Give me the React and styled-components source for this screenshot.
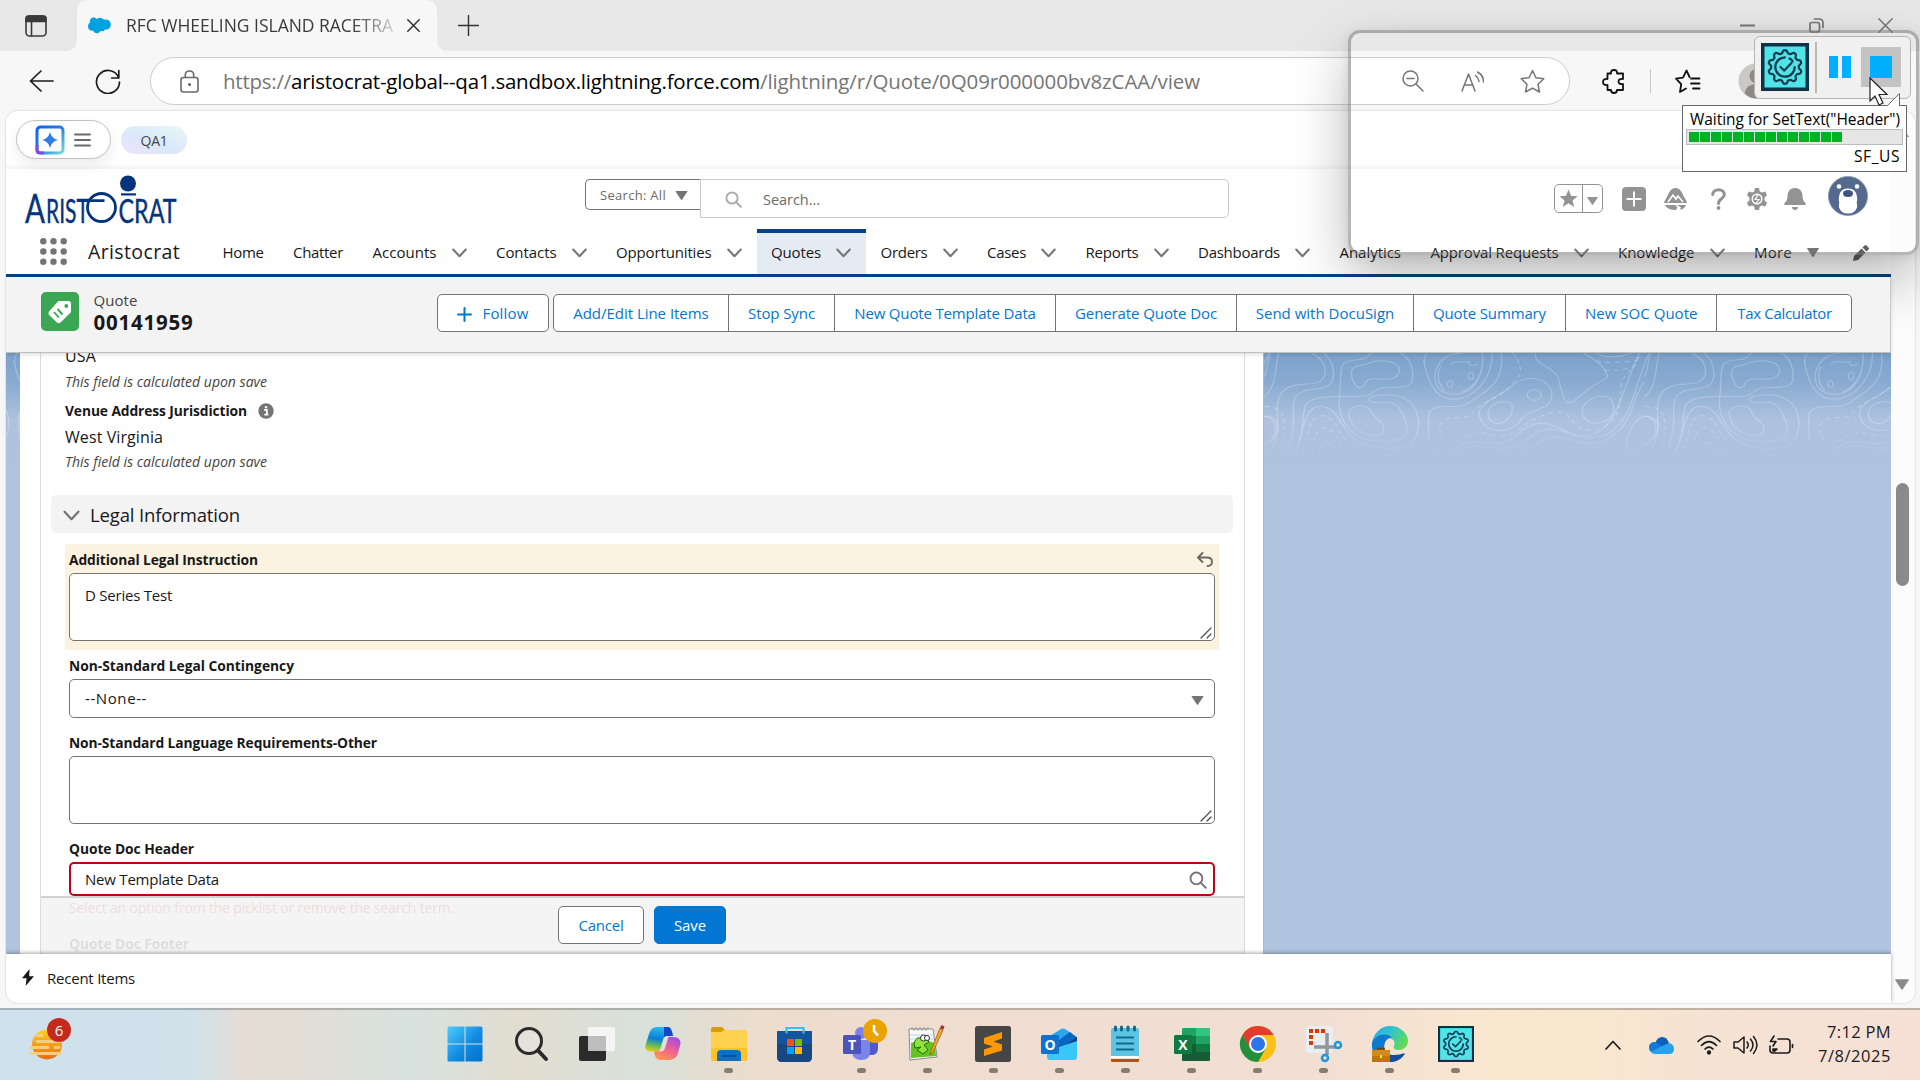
import React, { useLayoutEffect, useRef } from "react";
import styled, { createGlobalStyle, css } from "styled-components";

const Global = createGlobalStyle`
  * { box-sizing: border-box; }
  html, body { margin: 0; padding: 0; overflow: hidden; }
  body { font-family: "Open Sans", "Noto Sans", sans-serif; color: #181818; }
  svg { display: block; flex: none; }
`;

/* ---------- text that keeps to a column width ---------- */
const TextBox = styled.span`
  display: block;
  flex: none;
  white-space: nowrap;
  font-size: ${(p) => p.$size || 15}px;
  font-weight: ${(p) => p.$weight || 400};
  font-style: ${(p) => (p.$italic ? "italic" : "normal")};
  color: ${(p) => p.$color || "inherit"};
  line-height: ${(p) => p.$line || 20}px;
  width: ${(p) => p.$w}px;
  margin-top: ${(p) => p.$mt || 0}px;
`;

function Text({ w, size, weight, italic, color, line, mt, children }) {
  const ref = useRef(null);
  useLayoutEffect(() => {
    const inner = ref.current;
    inner.style.letterSpacing = "0px";
    const natural = inner.getBoundingClientRect().width;
    inner.style.letterSpacing = `${(w - natural) / inner.textContent.length}px`;
  }, [w]);
  return (
    <TextBox $w={w} $size={size} $weight={weight} $italic={italic} $color={color} $line={line} $mt={mt}>
      <span ref={ref}>{children}</span>
    </TextBox>
  );
}

/* ---------- window ---------- */
const Screen = styled.div`
  position: relative;
  width: 1920px;
  height: 1080px;
  overflow: hidden;
  display: flex;
  flex-direction: column;
  background: #f7f7f7;
`;
const TabStrip = styled.div`
  height: 51px;
  background: #e8e8e8;
  display: flex;
  align-items: center;
`;
const Tab = styled.div`
  position: relative;
  width: 360px;
  height: 51px;
  margin-left: 30px;
  padding-left: 10px;
  padding-right: 17px;
  display: flex;
  align-items: center;
  background: #f7f7f7;
  border-radius: 10px 10px 0 0;
  &::before, &::after {
    content: "";
    position: absolute;
    bottom: 0;
    width: 10px;
    height: 10px;
  }
  &::before { left: -10px; background: radial-gradient(circle at 0 0, transparent 9.5px, #f7f7f7 10px); }
  &::after { right: -10px; background: radial-gradient(circle at 100% 0, transparent 9.5px, #f7f7f7 10px); }
`;
const TabTitle = styled.div`
  margin: 0 14px 2px 15px;
  mask-image: linear-gradient(90deg, #000 85%, rgba(0, 0, 0, 0.2) 100%);
`;
const WindowButtons = styled.div`
  margin-left: auto;
  margin-right: 27px;
  display: flex;
  gap: 54px;
`;
const AddressRow = styled.div`
  height: 60px;
  display: flex;
  align-items: center;
  padding: 0 0 0 29px;
`;
const AddressBar = styled.div`
  width: 1420px;
  height: 48px;
  margin-left: 29px;
  border: 1.5px solid #cecece;
  border-radius: 24px;
  background: #fff;
  display: flex;
  align-items: center;
  padding: 0 23px 0 29px;
`;
const Url = styled.div`
  margin-left: 24px;
  margin-right: 202px;
  display: flex;
  padding-bottom: 1px;
`;
const AddressIcons = styled.div`
  display: flex;
  align-items: center;
  gap: 36px;
`;
const ToolbarIcons = styled.div`
  display: flex;
  align-items: center;
  margin-left: 32px;
  gap: 24px;
`;
const Divider = styled.span`
  width: 1px;
  height: 24px;
  background: #c8c8c8;
`;

/* ---------- page ---------- */
const Page = styled.div`
  height: 892px;
  width: 1909px;
  margin-left: 6px;
  display: flex;
  background: #fff;
  border-radius: 12px;
  box-shadow: 0 0 2px rgba(0, 0, 0, 0.25);
  overflow: hidden;
`;
const PageMain = styled.div`
  width: 1885px;
  display: flex;
  flex-direction: column;
`;
const ScrollTrack = styled.div`
  width: 24px;
  background: #fcfcfc;
  display: flex;
  flex-direction: column;
  align-items: center;
  padding: 16px 2px 13px 0;
`;
const ScrollThumb = styled.div`
  width: 13px;
  height: 103px;
  margin-top: 346px;
  margin-bottom: auto;
  border-radius: 7px;
  background: #8a8a8a;
`;
const EnvBar = styled.div`
  height: 58px;
  display: flex;
  align-items: center;
  gap: 10px;
  padding: 0 0 1px 10px;
  background: linear-gradient(#fff 90%, #f3f3f3);
`;
const EinsteinPill = styled.div`
  width: 95px;
  height: 39px;
  border: 1px solid #c0c0c0;
  border-radius: 20px;
  display: flex;
  align-items: center;
  gap: 9px;
  padding-left: 18px;
  background: #fff;
  box-shadow: 0 6px 14px rgba(0, 0, 0, 0.08);
`;
const EnvPill = styled.div`
  width: 66px;
  height: 28px;
  padding-top: 2px;
  border-radius: 14px;
  background: linear-gradient(20deg, #ece3fb, #dbe8fb 45%, #e8f7f5);
  display: flex;
  align-items: center;
  justify-content: center;
`;
const HeaderRow = styled.div`
  height: 60px;
  display: flex;
  padding-left: 18px;
`;
const LogoSlot = styled.div`
  padding-top: 6px;
  width: 561px;
`;
const ScopeSelect = styled.div`
  width: 115px;
  height: 31px;
  margin-top: 10px;
  border: 1px solid #747474;
  border-right: 0;
  border-radius: 5px 0 0 5px;
  display: flex;
  align-items: center;
  gap: 9px;
  padding-left: 14px;
`;
const SearchBox = styled.div`
  width: 529px;
  height: 39px;
  margin-top: 10px;
  border: 1px solid #c9c9c9;
  border-radius: 0 5px 5px 0;
  display: flex;
  align-items: center;
  padding-left: 24px;
  padding-top: 2px;
  gap: 21px;
  background: #fff;
`;
const HeaderTools = styled.div`
  margin-left: 325px;
  padding-top: 3px;
  height: 56px;
  display: flex;
  align-items: center;
`;
const FavBox = styled.div`
  width: 49px;
  height: 29px;
  border: 1px solid #939393;
  border-radius: 5px;
  display: flex;
  align-items: center;
`;
const FavCell = styled.div`
  width: ${(p) => p.$w}px;
  height: 100%;
  padding-top: ${(p) => (p.$line ? 4 : 0)}px;
  display: flex;
  align-items: center;
  justify-content: center;
  border-left: ${(p) => (p.$line ? "1px solid #939393" : "0")};
`;
const ToolIcon = styled.div`
  margin-left: ${(p) => p.$gap || 0}px;
  margin-top: ${(p) => p.$drop || 0}px;
`;
const NavBar = styled.div`
  height: 48px;
  border-bottom: 3px solid #014486;
  display: flex;
  padding-left: 34px;
`;
const AppName = styled.div`
  display: flex;
  align-items: center;
  gap: 21px;
  width: 168px;
`;
const NavItem = styled.div`
  display: flex;
  align-items: center;
  gap: 15px;
  padding: 1px 15px 0 14.5px;
  ${(p) =>
    p.$active &&
    css`
      background: #e5ebf2;
      border-top: 4px solid #014486;
      padding-top: 0;
      padding-bottom: 3px;
    `}
`;
const RecordHeader = styled.div`
  position: relative;
  z-index: 1;
  height: 76px;
  background: #f3f3f3;
  border-bottom: 1px solid #c0c0c0;
  border-right: 1px solid #c9c9c9;
  box-shadow: 0 2px 4px rgba(0, 0, 0, 0.12);
  display: flex;
  padding: 15px 0 0 35px;
`;
const RecordIcon = styled.div`
  width: 38px;
  height: 39px;
  border-radius: 5px;
  background: #3ba755;
  display: flex;
  align-items: center;
  justify-content: center;
`;
const RecordTitle = styled.div`
  margin-left: 14.5px;
  width: 343px;
  margin-top: -3px;
`;
const Button = styled.div`
  height: 38px;
  width: ${(p) => p.$w}px;
  margin-top: ${(p) => p.$mt || 0}px;
  display: flex;
  align-items: center;
  justify-content: center;
  gap: 11px;
  padding-bottom: 1px;
  border: 1px solid ${(p) => (p.$brand ? "#0176d3" : "#747474")};
  border-radius: 5px;
  color: ${(p) => (p.$brand ? "#fff" : "#0176d3")};
  background: ${(p) => (p.$brand ? "#0176d3" : "#fff")};
`;
const ButtonGroup = styled.div`
  display: flex;
  margin-left: 4px;
  margin-top: 2px;
  & > div { margin-left: -1px; border-radius: 0; padding-left: 1px; }
  & > div:first-child { margin-left: 0; border-radius: 5px 0 0 5px; }
  & > div:last-child { border-radius: 0 5px 5px 0; }
`;
const Body = styled.div`
  height: 601px;
  display: flex;
  background: #b0c4df;
  overflow: hidden;
`;
const TopoStrip = styled.div`
  width: ${(p) => p.$w}px;
  border-left: ${(p) => (p.$edge ? "1px solid #b8b8b8" : "0")};
  overflow: hidden;
`;
const Sheet = styled.div`
  width: 1243px;
  background: #fff;
  padding: 0 18px 0 20px;
`;
const Card = styled.div`
  position: relative;
  width: 1205px;
  height: 601px;
  overflow: hidden;
  border: 1px solid #dcdcdc;
  border-width: 0 1px;
  display: flex;
  flex-direction: column;
  & > div { flex: none; }
`;
const ReadOnly = styled.div`
  padding-left: 24px;
  margin-top: -8px;
`;
const LabelRow = styled.div`
  display: flex;
  align-items: center;
  gap: 11px;
  margin-top: 9px;
`;
const SectionHead = styled.div`
  height: 38px;
  width: 1182px;
  margin: 23px 0 11px 10px;
  background: #f3f3f3;
  border-radius: 5px;
  display: flex;
  align-items: center;
  gap: 10px;
  padding-left: 12px;
  padding-top: 2px;
`;
const Field = styled.div`
  width: 1154px;
  margin-left: 24px;
  padding: ${(p) => (p.$edited ? "6px 4px 9px" : "0 4px")};
  margin-bottom: ${(p) => (p.$edited ? 6 : 15)}px;
  background: ${(p) => (p.$edited ? "#fbf3e0" : "transparent")};
`;
const FieldLabel = styled.div`
  display: flex;
  justify-content: space-between;
  height: 20px;
  margin-bottom: 3px;
  padding-right: 2px;
`;
const Control = styled.div`
  height: ${(p) => p.$h}px;
  width: 1146px;
  background: #fff;
  border: ${(p) => (p.$error ? "2px solid #ba0517" : "1px solid #747474")};
  border-radius: 5px;
  display: flex;
  justify-content: space-between;
  align-items: ${(p) => (p.$area ? "stretch" : "center")};
  padding: ${(p) => (p.$area ? "11px 2px 1px 15px" : p.$error ? "0 6px 1px 14px" : "0 10px 2px 15px")};
`;
const Corner = styled.div`
  display: flex;
  align-items: flex-end;
  margin-left: auto;
`;
const Hidden = styled.div`
  margin: -13px 0 0 28px;
`;
const Footer = styled.div`
  position: absolute;
  left: 0;
  right: 0;
  bottom: 0;
  height: 58px;
  background: rgba(243, 243, 243, 0.9);
  border-top: 2px solid #d2d2d2;
  display: flex;
  gap: 10px;
  padding-top: 8px;
  padding-left: 517px;
`;
const UtilityBar = styled.div`
  position: relative;
  height: 49px;
  background: #fff;
  box-shadow: 0 -1px 4px rgba(0, 0, 0, 0.35);
  display: flex;
  align-items: center;
  gap: 12px;
  padding-left: 15px;
  padding-bottom: 2px;
`;

/* ---------- taskbar ---------- */
const Taskbar = styled.div`
  height: 72px;
  margin-top: 5px;
  border-top: 2px solid rgba(0, 0, 0, 0.22);
  display: flex;
  align-items: center;
  background: linear-gradient(90deg, #cfe1ed 0, #d1e1ea 190px, #e5ddd5 245px, #e3ddd5 290px, #d8e2df 410px, #e2ddd0 520px, #d8e1db 640px, #e6ddcf 720px, #edddcc 760px, #efddd0 900px, #f2dfd4 1320px, #f9e8cf 1500px, #f8e7cf 1600px, #f5e3d3 1700px, #f6e0d6 1920px);
  background-clip: border-box;
`;
const Widgets = styled.div`
  width: 431.5px;
  padding-left: 29px;
  padding-bottom: 10px;
`;
const TaskCell = styled.div`
  width: 66.1px;
  height: 70px;
  display: flex;
  flex-direction: column;
  align-items: center;
  padding-top: 8px;
`;
const RunningDot = styled.span`
  width: 9px;
  height: 5px;
  border-radius: 3px;
  margin-top: 6px;
  background: #857c74;
`;
const Tray = styled.div`
  margin-left: auto;
  margin-right: 29px;
  display: flex;
  align-items: center;
`;
const TrayIcon = styled.div`
  margin-right: ${(p) => p.$gap}px;
`;
const Clock = styled.div`
  display: flex;
  flex-direction: column;
  align-items: flex-end;
  padding-bottom: 3px;
`;

/* ---------- floating automation panel ---------- */
const Ghost = styled.div`
  position: absolute;
  left: 1348px;
  top: 30px;
  width: 571px;
  height: 225px;
  border: 3px solid rgba(110, 110, 110, 0.5);
  border-radius: 12px;
  box-shadow: 0 24px 56px rgba(0, 0, 0, 0.27), 0 2px 12px rgba(0, 0, 0, 0.08);
`;
const Panel = styled.div`
  position: absolute;
  left: 1754px;
  top: 36px;
  width: 157px;
  height: 63px;
  background: #f0f0f0;
  border: 1.5px solid #b9b4ac;
  border-radius: 6px;
  display: flex;
  align-items: center;
  padding-left: 6px;
  padding-bottom: 1px;
`;
const PanelLine = styled.span`
  width: 2px;
  height: 51px;
  margin-left: 6px;
  background: #bcb7af;
`;
const Pause = styled.span`
  width: 22px;
  height: 22px;
  margin-left: 12px;
  border: solid #00b0ff;
  border-width: 0 9px;
`;
const StopKey = styled.div`
  width: 40px;
  height: 40px;
  margin-left: 10px;
  margin-top: -1px;
  background: #c3c3c3;
  display: flex;
  align-items: center;
  justify-content: center;
`;
const StopSquare = styled.span`
  width: 22px;
  height: 22px;
  background: #00b0ff;
`;
const Tip = styled.div`
  position: absolute;
  left: 1682px;
  top: 105px;
  width: 225px;
  height: 67px;
  background: #fff;
  border: 1px solid #6a6a6a;
  padding: 3px 3px 0;
  display: flex;
  flex-direction: column;
  align-items: flex-end;
`;
const TipLine = styled.div`
  padding-right: 3px;
  color: #000;
`;
const Progress = styled.div`
  width: 217px;
  height: 16px;
  background: #e6e6e6;
  border: 1px solid #bcbcbc;
  display: flex;
  gap: 1px;
  padding: 2px;
`;
const Block = styled.span`
  width: 10px;
  background: #06b025;
`;
const Floating = styled.div`
  position: absolute;
  left: ${(p) => p.$x}px;
  top: ${(p) => p.$y}px;
`;

/* ---------- drawings ---------- */
const Stroke = ({ w, h, vb, c = "#5c5c5c", sw = 1.5, children }) => (
  <svg width={w} height={h} viewBox={vb || `0 0 ${w} ${h}`} fill="none" stroke={c} strokeWidth={sw} strokeLinecap="round" strokeLinejoin="round">
    {children}
  </svg>
);
const Chevron = ({ w = 15, h = 10 }) => (
  <Stroke w={w} h={h} vb="0 0 15 10" c="#747474" sw={2}><path d="M1.2 1.5 7.5 8.3l6.3-6.8" /></Stroke>
);
const Triangle = ({ w = 12, h = 9, c = "#747474" }) => (
  <svg width={w} height={h} viewBox="0 0 12 9"><path d="M.6 0h10.800q.9 0 .4.800L6.600 8.500q-.6.800-1.200 0L.2.800Q-.3 0 .6 0z" fill={c} /></svg>
);
const Magnifier = ({ s = 17, c = "#aeaeae", sw = 2 }) => (
  <Stroke w={s} h={s} vb="0 0 17 17" c={c} sw={sw}><circle cx="7" cy="7" r="5.6" /><path d="m11 11 4.8 4.8" /></Stroke>
);
const Resize = () => (
  <Stroke w={12} h={12} c="#4a4a4a" sw={1.2}><path d="M1 11 11 1M7 11l4-4" /></Stroke>
);

const SEAL = Array.from({ length: 121 }, (_, i) => {
  const t = (i / 120) * Math.PI * 2;
  const r = 15.2 + 1.7 * Math.max(-0.8, Math.min(0.9, 1.3 * Math.cos(t * 10)));
  return `${(24 + r * Math.sin(t)).toFixed(2)} ${(24 - r * Math.cos(t)).toFixed(2)}`;
}).join("L");

const GearSeal = ({ size, bw }) => (
  <svg width={size} height={size} viewBox="0 0 48 48">
    <rect x={bw / 2} y={bw / 2} width={48 - bw} height={48 - bw} fill="#50e3e8" stroke="#0f3247" strokeWidth={bw} />
    <g fill="none" stroke="#123b50" strokeWidth="2.200" strokeLinejoin="round" strokeLinecap="round">
      <path d={`M${SEAL}z`} />
      <path d="M24 14.300A9.700 9.700 0 1 0 33.700 24M28.500 15.500q2 1 3.200 2.800" />
      <path d="m19.500 24 3.800 3.600L30.500 20" />
    </g>
  </svg>
);

const AristocratLogo = () => (
  <svg width="160" height="64" viewBox="0 0 160 64" fill="#06347c" stroke="#06347c" fontFamily="Lato, sans-serif">
    <circle cx="104" cy="8.500" r="8" stroke="none" />
    <rect x="97" y="18.300" width="15" height="2.200" stroke="none" />
    <text x="1" y="47.500" fontSize="40" strokeWidth=".4" textLength="20" lengthAdjust="spacingAndGlyphs">A</text>
    <text x="22" y="47.500" fontSize="32" strokeWidth=".4" textLength="43" lengthAdjust="spacingAndGlyphs">RIST</text>
    <path d="M54 25.600h26.500" strokeWidth="2.600" />
    <circle cx="77.500" cy="32.500" r="14" fill="none" strokeWidth="2.800" />
    <text x="94.500" y="47.500" fontSize="32" strokeWidth=".4" textLength="58" lengthAdjust="spacingAndGlyphs">CRAT</text>
  </svg>
);

const Topo = ({ shift = 0, w }) => (
  <svg width={w} height="134" viewBox={`${54 + shift} 38 ${w * 2.306} 402`} preserveAspectRatio="none">
    <defs>
      <linearGradient id="sky" x1="0" y1="0" x2="0" y2="1">
        <stop offset="0" stopColor="#7ba1ca" />
        <stop offset=".22" stopColor="#89abd1" />
        <stop offset=".5" stopColor="#aec2df" />
        <stop offset="1" stopColor="#b0c4df" />
      </linearGradient>
      <linearGradient id="fade" x1="0" y1="38" x2="0" y2="350" gradientUnits="userSpaceOnUse">
        <stop offset="0" stopColor="#fff" stopOpacity=".23" />
        <stop offset=".65" stopColor="#fff" stopOpacity=".25" />
        <stop offset="1" stopColor="#fff" stopOpacity="0" />
      </linearGradient>
      <g id="contours" fill="none" stroke="url(#fade)" strokeWidth="3">
        <path d="M54 170c30-30 25-90 34-132M54 110c8-20 8-45 14-72M165 38c20 14 32 32 30 58-2 34-25 34-54 36-35 4-52 20-56 60-4 50 12 110-30 156" />
        <path d="M192 38c18 20 24 45 22 70-3 36-24 34-56 40-34 8-38 30-36 70 2 50-4 90-24 130" />
        <path d="M368 38c25 15 30 50 29 78-3 28-30 25-66 26-26 0-26 26-48 26-60 2-115-6-132 24-14 30 2 110-35 156" />
        <path d="M228 168c4-30 0-60 6-90 8-25 38-15 54-25l14-15M256 95c2-26 26-15 42-28 22-10 66-8 68 22 0 34-38 28-58 26-26 0-18 26-32 27-12 0-22-26-20-47z" />
        <path d="M120 348c24-40 20-150 64-150 40 2 46 60 76 96 34 38 100 32 120 26 30-12 34-70 28-94-8-50-42-66-82-62-24 0-38 14-24 21 20 6 40-8 60 12 16 30 22 60 22 75-4 38-60 34-90 28-60-24-70-90-66-130" />
        <path d="M250 222c-2-20 20-28 36-24 20 8 14 28 30 40 22 22 18 48-8 48-30-4-55-26-58-64z" />
        <path d="M422 60c6 40 20 110 60 116 60 6 100-70 98-138M430 38q-10 15-4 40" />
        <path d="M510 38c-36 0-60 30-62 70 0 40 20 54 48 54 40-4 66-50 62-124M462 78c-10 20-8 50 8 72M558 70c-4 36-14 64-46 84M484 72c10-16 26-2 44-8-2 18 10 10 20 8" />
        <ellipse cx="483" cy="131" rx="6" ry="10" /><ellipse cx="531" cy="107" rx="6" ry="11" />
        <path d="M433 300c2-30-2-60 2-84 16-30 60-8 86-24 46-40 88-62 80-154" />
        <path d="M436 320c8 25 50 12 70-2 30-30 60 0 100-10 30-12 44-55 84-60 44 0 60 42 110 38 70-10 84-160 120-248" />
        <path d="M490 340c60-50 90 0 140-20 36-20 54-66 100-50 40 10 70 40 118 10 60-50 60-150 94-242M560 345c60-30 90 0 120-30 60-60 90 10 150-10 80-40 70-130 100-180M549 220c6-40 50-50 84-90 34-32 86-12 85 35-4 50-50 36-70 70-20 50-90 50-99-15z" />
        <path d="M572 210c4-24 50-38 54-14 6 40-30 70-50 44-6-8-6-20-4-30z" />
        <circle cx="677" cy="164" r="16" />
        <path d="M680 38c-6 40 50 40 54 84 4 20 12 60 20 66 22 0 30-36 92-76 0-20-20-52-56-74M788 220c-4-24 20-54 46-52 24-2 28 24 26 44-6 40-60 54-72 8zM820 38c20 18 60 12 82 0" />
        <path d="M892 335c-8-30 10-106 44-108 44 12 30 60-4 86-16 14-30 20-40 22zM54 228c40 2 30 80 0 86M184 348c-4-30 10-68 34-20l26 20" />
        <g strokeDasharray="12 10">
          <path d="M628 38c10 20 30 50 6 82-34 60-84 60-104 106-18 12-60-6-70 28-6 60 30 60 54 40 50-40 60 6 110-12 40-34 60-60 112-68 30 2 28 56 70 54 60-4 70-50 72-140 10-40 30-30 42-90M820 62q40 10 96-2M838 90q50 4 78-20" />
          <path d="M142 348c18-60 8-120 48-122 40 12 30 60 70 94M166 348c2-50 6-84 28-86 34 10 30 60 66 86M54 198c60 0 50 60 40 130" />
        </g>
      </g>
    </defs>
    <rect x="-900" y="38" width="3600" height="402" fill="url(#sky)" />
    <use href="#contours" x="-877" /><use href="#contours" /><use href="#contours" x="877" />
  </svg>
);

const Cloud = ({ w, h, c }) => (
  <svg width={w} height={h} viewBox="0 0 24 17"><path d="M10 2.100A4.700 4.700 0 0 1 17 2.800 5 5 0 0 1 23.800 7.500c0 3.400-2.800 5.500-5.800 4.900-.9 1.700-3 2.300-4.600 1.500-1.400 3-6 3.200-7.300-.3C3.300 14.200.9 12 1 9.300 1.200 7.400 2 6.300 3 5.600 1.800.3 7.600-1.100 10 2.100z" fill={c} /></svg>
);

/* taskbar app drawings, each on a 36 x 36 grid */
const apps = [
  { id: "start", art: (<>
    <defs><linearGradient id="win" x1="0" y1="0" x2="1" y2="1"><stop offset="0" stopColor="#4ecbff" /><stop offset=".55" stopColor="#128be0" /><stop offset="1" stopColor="#0070d0" /></linearGradient></defs>
    <path d="M2 .5h15.500v17H.5V2Q.5.500 2 .5zM18.500.500H34q1.500 0 1.500 1.500v15.500h-17zM.5 18.500h17v17H2Q.5 35.500.5 34zM18.500 18.500h17V34q0 1.500-1.500 1.500H18.500z" fill="url(#win)" /></>) },
  { id: "search", art: (<g fill="none" stroke="#2b2b2b" strokeLinecap="round"><circle cx="16" cy="15" r="12.500" strokeWidth="3" fill="#e8e8e6" fillOpacity=".5" /><path d="m25.500 25 7.500 8" strokeWidth="4" /></g>) },
  { id: "tasks", art: (<><rect x="0" y="10" width="27" height="25" rx="2" fill="#2b2b2b" /><rect x="9" y="1" width="27" height="24" rx="2" fill="#f6f6f6" fillOpacity=".93" /><path d="M9 10h18v15H10q-1 0-1-1z" fill="#bdbdbd" /></>) },
  { id: "copilot", art: (<>
    <defs><linearGradient id="c1" x1=".3" y1="0" x2=".1" y2="1"><stop offset="0" stopColor="#1fb8f0" /><stop offset=".45" stopColor="#0d7fd6" /><stop offset=".7" stopColor="#5cb860" /><stop offset="1" stopColor="#f5cf1a" /></linearGradient><linearGradient id="c2" x1=".8" y1="0" x2=".2" y2="1"><stop offset="0" stopColor="#a04be8" /><stop offset=".5" stopColor="#f06292" /><stop offset="1" stopColor="#ff9a4a" /></linearGradient></defs>
    <path d="M9 25.500 15 24l6-13h7q8 0 7.500 7L33 27q-2 7-9 7H15q-5 0-6-8.500z" fill="url(#c2)" />
    <path d="M12 1h11q3.500 0 5 9h-6q-3 0-4 4l-2.500 8q-1 3.500-5 3.500H5Q-.5 25.500.5 19L4 8q2-7 8-7z" fill="url(#c1)" />
    <path d="M19 1h4q3.500 0 5 9h-6q-2 0-3 2z" fill="#1747c8" />
    <path d="M19 11.500q1-1.500 3.500-1.500h1.200L20 22q-1 3.500-5 3.500h-1.500q1.800-1 2.500-3.500z" fill="#dfe2dc" /></>) },
  { id: "explorer", run: true, art: (<>
    <path d="M0 3q0-2 2-2h9l4 4v5H0z" fill="#dd9a08" /><path d="M0 6h10l3-2h21q2 0 2 2v27q0 2-2 2H2q-2 0-2-2z" fill="#ffd04b" /><path d="M0 22h36v11q0 2-2 2H2q-2 0-2-2z" fill="#fcc226" />
    <path d="M6 35V28q0-4 4-4h16q4 0 4 4v7z" fill="#0f6fc4" /><path d="M11 30h14" stroke="#084f94" strokeWidth="2" /></>) },
  { id: "store", art: (<><path d="M9.500 9V2h17v7" fill="none" stroke="#30c0f4" strokeWidth="2.200" /><path d="M0 5h35v26q0 5-5 5H5q-5 0-5-5z" fill="#12559b" /><path d="M0 18h35v13q0 5-5 5H5q-5 0-5-5z" fill="#1b4278" opacity=".7" /><path d="M9.500 7.500V5M26.500 7.500V5" stroke="#30c0f4" strokeWidth="2.200" /><path d="M10 13h7v7h-7z" fill="#f25022" /><path d="M18 13h7v7h-7z" fill="#7fba00" /><path d="M10 21h7v7h-7z" fill="#00a4ef" /><path d="M18 21h7v7h-7z" fill="#ffb900" /></>) },
  { id: "teams", run: true, art: (<><circle cx="18" cy="7" r="6" fill="#7b83eb" /><path d="M23 14h12v8q0 7-6 7h-6z" fill="#5059c9" /><path d="M9 14h18v12q0 8-9 8-8 0-9-8z" fill="#7b83eb" /><rect x="0" y="9" width="18" height="19" rx="1.500" fill="#4b53bc" /><text x="9" y="24" textAnchor="middle" fontFamily="Open Sans" fontWeight="700" fontSize="14" fill="#fff">T</text><circle cx="32" cy="5" r="12" fill="#eaa300" /><path d="M31-1v6l4 4.500" stroke="#fff" strokeWidth="2.500" fill="none" /></>) },
  { id: "npp", run: true, art: (<><path d="M0 3h24l4 28-27 3z" fill="#fafafa" stroke="#8a8a8a" /><path d="M2 3q1-3 2 0t2 0 2 0 2 0 2 0 2 0 2 0 2 0 2 0" fill="none" stroke="#999" /><path d="M2 17q12-5 24 0l1 13-25 2z" fill="#62c41c" /><path d="M1 9h24M1 13h24" stroke="#b9d3ee" /><path d="M5 17q3-8 9-4l4-3 2 6-5 3 4 5-5 4-6-4 4-3-6 1z" fill="#8fe43c" stroke="#1d6b17" /><circle cx="14.500" cy="12" r="3" fill="#fff" stroke="#333" /><circle cx="18" cy="12" r="2.500" fill="#fff" stroke="#333" /><path d="m31 2-9 23-1 4 3-3L34 4z" fill="#f0a92c" stroke="#9a611a" strokeWidth=".8" /><path d="m31 2 1.500-3 3 1.500L34 4z" fill="#a53030" /></>) },
  { id: "sublime", run: true, art: (<><rect width="36" height="36" rx="2.500" fill="#464646" /><path d="m9 12 18-6v6.500L18.500 15.500 27 18.500v6L9 30v-6.500l9-3-9-3z" fill="#ff9800" /></>) },
  { id: "outlook", run: true, art: (<><path d="M9 10 20 3q2-1 4 0l12 8v8L9 25z" fill="#28a8ea" /><path d="m14 17 15-11 7 6-18 12z" fill="#0a64c2" /><path d="M18 24 36 11v6L20 27z" fill="#123b8c" /><path d="M6 25 36 15v16q0 3-3 3H9q-3 0-3-3z" fill="#39c7f8" /><rect y="9" width="18" height="19" rx="1.500" fill="#0f72d0" /><text x="9" y="24" textAnchor="middle" fontFamily="Open Sans" fontWeight="700" fontSize="14" fill="#fff">O</text></>) },
  { id: "notepad", run: true, art: (<><rect x="4" y="2" width="28" height="30" rx="2" fill="#5cc3e2" /><path d="M4 30h28v2H4z" fill="#fff" /><path d="M4 33h28v2q0 1-1 1H5q-1 0-1-1z" fill="#b5530d" /><path d="M9 11.500h18M9 17.500h18M9 23.500h18" stroke="#0d6a92" strokeWidth="2" /><path d="M8.500 1v3M14.500 1v3M21 1v3M27.500 1v3" stroke="#14688a" strokeWidth="3" strokeLinecap="round" /></>) },
  { id: "excel", run: true, art: (<><rect x="8" y="2" width="28" height="33" rx="1.500" fill="#21a366" /><path d="M22 2h12.500Q36 2 36 3.500V10H22z" fill="#33c481" /><path d="M8 10h14v8H8zM22 18h14v8H22z" fill="#107c41" /><path d="M8 18h14v8H8zM8 26h28v7.500q0 1.500-1.500 1.500h-25Q8 35 8 33.500z" fill="#185c37" /><rect y="9" width="18" height="19" rx="1.500" fill="#0f7a3f" /><text x="9" y="24" textAnchor="middle" fontFamily="Open Sans" fontWeight="700" fontSize="14" fill="#fff">X</text></>) },
  { id: "chrome", run: true, art: (<><circle cx="18" cy="18" r="18" fill="#fbc116" /><path d="M2.400 9A18 18 0 0 1 33.600 9H18L9.500 22z" fill="#e33b2e" /><path d="M2.400 9A18 18 0 0 0 18 36l8-14-8 5-8-5z" fill="#22903f" /><circle cx="18" cy="18" r="9" fill="#fff" /><circle cx="18" cy="18" r="7" fill="#2f74ea" /></>) },
  { id: "snip", run: true, art: (<><rect width="27" height="27" rx="3" fill="#e9eef3" /><path d="M3 3h4v4H3zM9 3h4v4H9zM15 3h4v4h-4zM3 9h4v4H3zM3 15h4v4H3z" fill="#d83b01" /><path d="M21 7v22M8 21h22" stroke="#8e979d" strokeWidth="3.500" /><circle cx="32" cy="19" r="3" fill="none" stroke="#1d97e0" strokeWidth="2.500" /><circle cx="19" cy="32" r="3" fill="none" stroke="#1d97e0" strokeWidth="2.500" /></>) },
  { id: "edge", run: true, art: (<>
    <defs><linearGradient id="e1" x1="0" y1="0" x2="1" y2=".5"><stop offset="0" stopColor="#2ba8e8" /><stop offset=".5" stopColor="#30c3cd" /><stop offset="1" stopColor="#62da55" /></linearGradient></defs>
    <path d="M0 18C1 7 9 0 18 0c11 0 18 8 18 15 0 6-5 9-9 9-5 0-6-2-5-4 2-4-1-8-6-8-8 0-15 4-16 14z" fill="url(#e1)" /><path d="M0 17c2-8 15-12 20-5-7-1-9 8-7 13 2 6 11 6 20 3-4 6-10 8-15 8C8 36-1 28 0 17z" fill="#0f78cf" /><path d="M13 24c2 6 11 6 20 3-4 6-8 9-15 9z" fill="#124d9c" />
    <path d="M0 24h18v12H0z" fill="#c07410" /><path d="M0 24h18v6H0z" fill="#d68a14" /><path d="M6 24v-1.500h6V24" stroke="#6d3e05" strokeWidth="1.500" fill="none" /><path d="M8 29h2v3H8z" fill="#ffe14d" /></>) },
  { id: "runner", run: true, art: <GearSeal size={36} bw={2.8} /> },
];

const nav = [
  ["Home", 41, 0], ["Chatter", 50, 0], ["Accounts", 64, 1], ["Contacts", 60.5, 1], ["Opportunities", 95.5, 1],
  ["Quotes", 50, 1], ["Orders", 47, 1], ["Cases", 39, 1], ["Reports", 53, 1], ["Dashboards", 82, 1],
  ["Analytics", 61.5, 0], ["Approval Requests", 128, 1], ["Knowledge", 76.5, 1],
];
const actions = [
  ["Add/Edit Line Items", 176, 135.5], ["Stop Sync", 107, 67], ["New Quote Template Data", 222, 181.5],
  ["Generate Quote Doc", 182, 142], ["Send with DocuSign", 178, 138.5], ["Quote Summary", 153, 113],
  ["New SOC Quote", 152.5, 112.5], ["Tax Calculator", 136, 94.5],
];

function BrowserChrome() {
  return (
    <>
      <TabStrip>
        <ToolIcon $gap={25}>
          <Stroke w={22} h={22} c="#3a3a3a" sw={1.6}><rect x="1" y="1" width="20" height="20" rx="3.500" /><path d="M1 3.500q0-2.500 2.500-2.500h15Q21 1 21 3.500V6.500H1z" fill="#3a3a3a" /><path d="M6.500 7v14" /></Stroke>
        </ToolIcon>
        <Tab>
          <Cloud w={24} h={17} c="#00a1e0" />
          <TabTitle><Text w={267} size={17.5} color="#3a3a3a" line={24}>RFC WHEELING ISLAND RACETRA</Text></TabTitle>
          <Stroke w={13} h={13} c="#333" sw={1.5}><path d="m.8.800 11.400 11.400M12.200.800.800 12.200" /></Stroke>
        </Tab>
        <ToolIcon $gap={21}><Stroke w={21} h={21} c="#333" sw={1.4}><path d="M10.500.500v20M.5 10.500h20" /></Stroke></ToolIcon>
        <WindowButtons>
          <Stroke w={15} h={15} c="#777" sw={2}><path d="M.5 7.500h14" /></Stroke>
          <Stroke w={15} h={15} c="#777" sw={1.7}><rect x="1" y="4.500" width="9.500" height="9.500" rx="2" /><path d="M5.500 1H10q4 0 4 4v4.500" /></Stroke>
          <Stroke w={15} h={15} c="#777" sw={1.5}><path d="m.8.800 13.400 13.400M14.200.800.800 14.200" /></Stroke>
        </WindowButtons>
      </TabStrip>
      <AddressRow>
        <Stroke w={25} h={22} c="#1c1c1c" sw={1.7}><path d="M24 11H1.500M12 1 1.500 11 12 21" /></Stroke>
        <ToolIcon $gap={41}><Stroke w={26} h={25} c="#1c1c1c" sw={1.7}><path d="M23.800 9A11.500 11.500 0 1 0 24.500 13M23.800 1.500V9h-7" /></Stroke></ToolIcon>
        <AddressBar>
          <Stroke w={19} h={23} c="#6a6a6a" sw={1.6}><rect x="1" y="7.500" width="17" height="14.500" rx="2.500" /><path d="M5.300 7V5q0-4 4.200-4t4.200 4v2" /><circle cx="9.500" cy="14.500" r=".8" fill="#6a6a6a" /></Stroke>
          <Url>
            <Text w={68} size={20.5} color="#757575" line={28}>https://</Text>
            <Text w={469} size={20.5} color="#000" line={28}>aristocrat-global--qa1.sandbox.lightning.force.com</Text>
            <Text w={440} size={20.5} color="#757575" line={28}>/lightning/r/Quote/0Q09r000000bv8zCAA/view</Text>
          </Url>
          <AddressIcons>
            <Stroke w={22} h={22} c="#757575"><circle cx="8.500" cy="8.500" r="7.500" /><path d="M5 8.500h7M14 14l7 7" /></Stroke>
            <Stroke w={24} h={21} c="#757575"><path d="m2 20 6.500-17L15 20M4.500 14h8.500M15.500 4.500q3 2.500 3.500 6M17.500 1q6 3 6 10" /></Stroke>
            <Stroke w={25} h={24} c="#757575"><path d="m12.500 1.500 3.400 7.200 7.900 1-5.800 5.500 1.500 7.800-7-3.900-7 3.900L7 15.200 1.200 9.700l7.900-1z" /></Stroke>
          </AddressIcons>
        </AddressBar>
        <ToolbarIcons>
          <Stroke w={24} h={25} c="#111" sw={1.8}><path d="M5.500 4.500h3.500q-.5-3.500 3-3.500t3 3.500h6V10q-4.500-.5-4.500 2.500t4.500 2.500v6h-6q0 3-3 3t-3-3H5.500v-5Q1 16.500 1 13t4.500-3z" /></Stroke>
          <Divider />
          <Stroke w={26} h={25} c="#111" sw={1.8}><path d="M14.500 8 11.500 1.500 8 8.700l-7 1 5.200 5.500L5 23l6-3.500M16 9.500h8.500M16 14.500h8.500M18 19.500h6.500" /></Stroke>
          <svg width="52" height="42" viewBox="0 0 52 42"><circle cx="31" cy="21" r="17.500" fill="#cbc9c5" /><circle cx="32" cy="16" r="7.500" fill="#8c8a87" /><path d="M19.500 33q2-9 12.500-9v14.500q-8 0-12.500-5.500z" fill="#8c8a87" /></svg>
        </ToolbarIcons>
      </AddressRow>
    </>
  );
}

function AppHeader() {
  return (
    <>
      <EnvBar>
        <EinsteinPill>
          <svg width="30" height="30" viewBox="0 0 30 30">
            <defs><linearGradient id="ein" x1="0" y1="0" x2="1" y2="1"><stop offset="0" stopColor="#0f62f5" /><stop offset=".5" stopColor="#2a7de1" /><stop offset="1" stopColor="#6fe0cf" /></linearGradient></defs>
            <rect x="2" y="2" width="26" height="26" rx="3.500" fill="#fff" stroke="url(#ein)" strokeWidth="3" />
            <path d="M2 20v5q0 3 3 3h4" fill="none" stroke="#7b4fe0" strokeWidth="3" />
            <path d="M15 7q1.500 6.500 8 8-6.500 1.500-8 8-1.500-6.500-8-8 6.500-1.500 8-8z" fill="#2f7ee6" />
          </svg>
          <Stroke w={17} h={14} c="#6b6b6b" sw={2}><path d="M1 1.500h15M1 7h15M1 12.500h15" /></Stroke>
        </EinsteinPill>
        <EnvPill><Text w={27} size={14} color="#444">QA1</Text></EnvPill>
      </EnvBar>
      <HeaderRow>
        <LogoSlot><AristocratLogo /></LogoSlot>
        <ScopeSelect><Text w={66} size={13} color="#6b6b6b">Search: All</Text><ToolIcon $drop={2}><Triangle w={13} /></ToolIcon></ScopeSelect>
        <SearchBox><Magnifier /><Text w={57} size={14.5} color="#6b6b6b">Search...</Text></SearchBox>
        <HeaderTools>
          <FavBox>
            <FavCell $w={28}><svg width="19" height="19" viewBox="0 0 20 20"><path d="m10 .5 2.600 6.600 7 .4-5.400 4.500 1.800 6.900L10 15l-6 3.900L5.800 12 .4 7.500l7-.4z" fill="#939393" /></svg></FavCell>
            <FavCell $w={20} $line><Triangle w={11} h={8} c="#939393" /></FavCell>
          </FavBox>
          <ToolIcon $gap={19}><svg width="24" height="24" viewBox="0 0 24 24"><rect width="24" height="24" rx="4" fill="#939393" /><path d="M12 4.500v15M4.500 12h15" stroke="#fff" strokeWidth="2" /></svg></ToolIcon>
          <ToolIcon $gap={18}><svg width="23" height="22" viewBox="0 0 23 22"><path d="M11.500 0C16 0 18 4 20 9c2 3 3 5 3 6H0c0-1 1-3 3-6C5 4 7 0 11.500 0z" fill="#939393" /><path d="m4 14 5-7 3 4 2-3 5 6" fill="none" stroke="#fff" strokeWidth="1.600" /><path d="M1 17h10l2.500 2-1.500 3Q3 22 1 17zM13 17h9q-1.500 4-6 4.800l1-2.300z" fill="#939393" /></svg></ToolIcon>
          <ToolIcon $gap={24}><svg width="15" height="22" viewBox="0 0 15 22"><path d="M1.700 6.500C2 0 13.300 0 13.300 6.500c0 4.500-5.800 4-5.800 9" fill="none" stroke="#939393" strokeWidth="3" strokeLinecap="round" /><circle cx="7.500" cy="20" r="1.900" fill="#939393" /></svg></ToolIcon>
          <ToolIcon $gap={20}><svg width="22" height="22" viewBox="0 0 22 22"><path d="M9 0h4l.8 3.400 2 1.100 3.300-1 2 3.500-2.500 2.500v3l2.500 2.500-2 3.500-3.300-1-2 1.100L13 22H9l-.8-3.400-2-1.100-3.300 1-2-3.500 2.500-2.500v-3L.9 7l2-3.500 3.300 1 2-1.100z" fill="#939393" /><circle cx="11" cy="11" r="4.800" fill="none" stroke="#fff" strokeWidth="1.500" /><path d="m12 7-3 4.500h4L10 15.500" stroke="#fff" strokeWidth="1.200" fill="none" /></svg></ToolIcon>
          <ToolIcon $gap={16}><svg width="22" height="22" viewBox="0 0 22 22"><path d="M11 0q7 0 7.500 8 0 5 3 7 1 2-.5 2H1q-1.500 0-.5-2 3-2 3-7Q4 0 11 0zM8 19h6q0 3-3 3t-3-3z" fill="#939393" /></svg></ToolIcon>
          <ToolIcon $gap={22} $drop={-4}>
            <svg width="40" height="42" viewBox="0 0 40 42"><circle cx="20" cy="20" r="19.600" fill="#54698d" stroke="#8d98ad" strokeWidth=".8" /><circle cx="11" cy="10.500" r="2.300" fill="#fff" /><circle cx="29" cy="10.500" r="2.300" fill="#fff" /><path d="M20 12.500q8 0 9 8 .5 3-.3 6 .8 3 .3 5-2 6-9 6t-9-6q-.5-2 .3-5-.8-3-.3-6 1-8 9-8z" fill="#fff" /><path d="M20 14q5 0 5 3.500t-5 3.500q-5 0-5-3.500t5-3.500z" fill="#3f5580" /></svg>
          </ToolIcon>
        </HeaderTools>
      </HeaderRow>
      <NavBar>
        <AppName>
          <svg width="27" height="27" viewBox="0 0 27 27">{[3.3, 13.5, 23.7].map((x) => [3.3, 13.5, 23.7].map((y) => <circle key={x + "-" + y} cx={x} cy={y} r="3.200" fill="#747474" />))}</svg>
          <Text w={92} size={19.5} line={26}>Aristocrat</Text>
        </AppName>
        {nav.map(([name, w, menu]) => (
          <NavItem key={name} $active={name === "Quotes"}>
            <Text w={w} size={15}>{name}</Text>
            {menu ? <ToolIcon $drop={2}><Chevron /></ToolIcon> : null}
          </NavItem>
        ))}
        <NavItem>
          <Text w={38} size={15}>More</Text>
          <Triangle />
          <ToolIcon $gap={19} $drop={2}><svg width="16" height="16" viewBox="0 0 16 16"><path d="m1 11 7.500-7.500 4 4L5 15l-5 1zM9.500 2.500 11.500.500q1-1 2 0l2 2q1 1 0 2l-2 2z" fill="#5f5f5f" /></svg></ToolIcon>
        </NavItem>
      </NavBar>
    </>
  );
}

function QuoteForm() {
  return (
    <Card>
      <ReadOnly>
        <Text w={31} size={16} line={22}>USA</Text>
        <Text w={202} size={14} italic color="#444" mt={5}>This field is calculated upon save</Text>
        <LabelRow>
          <Text w={182} size={13.8} weight={700}>Venue Address Jurisdiction</Text>
          <svg width="16" height="16" viewBox="0 0 16 16"><circle cx="8" cy="8" r="7.700" fill="#747474" /><path d="M6.300 7h2.600v4.500M6.300 11.700h4" stroke="#fff" strokeWidth="1.800" fill="none" /><circle cx="8" cy="4.200" r="1.200" fill="#fff" /></svg>
        </LabelRow>
        <Text w={98} size={16} line={22} mt={5}>West Virginia</Text>
        <Text w={202} size={14} italic color="#444" mt={4}>This field is calculated upon save</Text>
      </ReadOnly>
      <SectionHead><Chevron w={17} h={11} /><Text w={150} size={18.5} line={26}>Legal Information</Text></SectionHead>
      <Field $edited>
        <FieldLabel>
          <Text w={189} size={13.8} weight={700}>Additional Legal Instruction</Text>
          <ToolIcon $drop={2}><Stroke w={16} h={15} c="#666" sw={1.8}><path d="M5.500 1 1 5.500 5.500 10M1.500 5.500H10q5 0 5 4.200T10.500 14" /></Stroke></ToolIcon>
        </FieldLabel>
        <Control $h={68} $area><Text w={87} size={15}>D Series Test</Text><Corner><Resize /></Corner></Control>
      </Field>
      <Field>
        <FieldLabel><Text w={225} size={13.8} weight={700}>Non-Standard Legal Contingency</Text></FieldLabel>
        <Control $h={39}><Text w={62} size={15}>--None--</Text><ToolIcon $drop={5}><Triangle w={13} /></ToolIcon></Control>
      </Field>
      <Field>
        <FieldLabel><Text w={308} size={13.8} weight={700}>Non-Standard Language Requirements-Other</Text></FieldLabel>
        <Control $h={68} $area><Corner><Resize /></Corner></Control>
      </Field>
      <Field>
        <FieldLabel><Text w={125} size={13.8} weight={700}>Quote Doc Header</Text></FieldLabel>
        <Control $h={34} $error><Text w={134} size={15}>New Template Data</Text><ToolIcon $drop={2}><Magnifier s={18} c="#747474" sw={1.8} /></ToolIcon></Control>
      </Field>
      <Hidden>
        <Text w={385} size={14} color="#ba0517">Select an option from the picklist or remove the search term.</Text>
        <Text w={120} size={13.8} weight={700} mt={16}>Quote Doc Footer</Text>
      </Hidden>
      <Footer>
        <Button $w={86}><Text w={45} size={15}>Cancel</Text></Button>
        <Button $w={72} $brand><Text w={32} size={15}>Save</Text></Button>
      </Footer>
    </Card>
  );
}

function SystemTaskbar() {
  return (
    <Taskbar>
      <Widgets>
        <svg width="44" height="44" viewBox="0 0 44 44">
          <defs><linearGradient id="sun" x1="0" y1="0" x2="0" y2="1"><stop offset="0" stopColor="#ffd21f" /><stop offset="1" stopColor="#ec6a0c" /></linearGradient></defs>
          <circle cx="18" cy="26.500" r="15" fill="url(#sun)" />
          <path d="M8 17.500h5M8 23.500h24M2 29.500h17M26 29.500h4M2 35.500h29" stroke="#f0cf86" strokeWidth="2.800" strokeLinecap="round" />
          <circle cx="30" cy="12" r="12" fill="#c42b1c" />
          <text x="30" y="17.500" textAnchor="middle" fontSize="15" fill="#fff" fontFamily="Open Sans">6</text>
        </svg>
      </Widgets>
      {apps.map((a) => (
        <TaskCell key={a.id}>
          <svg width="36" height="44" viewBox="0 -8 36 44" overflow="visible">{a.art}</svg>
          {a.run && <RunningDot />}
        </TaskCell>
      ))}
      <Tray>
        <TrayIcon $gap={28}><Stroke w={16} h={10} c="#1b1b1b" sw={1.7}><path d="m1 9 7-7.500L15 9" /></Stroke></TrayIcon>
        <TrayIcon $gap={23}><svg width="25" height="17" viewBox="0 0 25 17"><path d="M6 7Q8 0 13 0q5 0 7 6l-5 6z" fill="#0f5fb8" /><path d="M5 5q3 0 8 4l-8 7Q0 15 0 10.500 0 5.500 5 5z" fill="#1278d6" /><path d="m13 9 7-3q5 1 5 6 0 5-5 5H6q-3 0-4-2z" fill="#28a2ee" /></svg></TrayIcon>
        <TrayIcon $gap={12}><Stroke w={24} h={20} c="#1b1b1b" sw={1.7}><path d="M1 6.500q11-11 22 0M4.500 10.500q7.500-7.500 15 0M8 14q4-4 8 0" /><circle cx="12" cy="17.500" r="1.300" fill="#1b1b1b" /></Stroke></TrayIcon>
        <TrayIcon $gap={11}><Stroke w={25} h={20} c="#1b1b1b" sw={1.5}><path d="M1 7h4l6-5v16l-6-5H1zM14 7q2.500 3 0 6M17.500 4q5 6 0 12M20.500 1.500q7 8.500 0 17" /></Stroke></TrayIcon>
        <TrayIcon $gap={24}><Stroke w={25} h={20} c="#1b1b1b" sw={1.6}><path d="M9 4h9q3 0 3 3v8q0 3-3 3H4q-3 0-3-3v-4M23.500 9.500v3" /><path d="M5 1 1.500 6.500H7L4 11" /><path d="M4 14h4l-2 2H4z" fill="#1b1b1b" /></Stroke></TrayIcon>
        <Clock>
          <Text w={64} size={16.5} line={24} color="#1b1b1b">7:12 PM</Text>
          <Text w={73} size={16.5} line={24} color="#1b1b1b">7/8/2025</Text>
        </Clock>
      </Tray>
    </Taskbar>
  );
}

function AutomationPanel() {
  return (
    <>
      <Ghost />
      <Tip>
        <TipLine><Text w={210} size={15.5} line={20}>Waiting for SetText("Header")</Text></TipLine>
        <Progress>{Array.from({ length: 14 }, (_, i) => <Block key={i} />)}</Progress>
        <TipLine><Text w={46} size={15.5} line={22}>SF_US</Text></TipLine>
      </Tip>
      <Panel>
        <GearSeal size={48} bw={3.5} />
        <PanelLine />
        <Pause />
        <StopKey><StopSquare /></StopKey>
      </Panel>
      <Floating $x={1887} $y={93}><svg width="14" height="14" viewBox="0 0 14 14"><path d="M0 13 12.500.500V13" fill="#fff" stroke="#6a6a6a" /></svg></Floating>
      <Floating $x={1869} $y={77}><svg width="20" height="29" viewBox="0 0 20 29"><path d="M1 1v23l5-5 4 9 4-2-4-8.500h8z" fill="#fff" stroke="#222" strokeWidth="1.200" /></svg></Floating>
    </>
  );
}

export default function App() {
  return (
    <Screen>
      <Global />
      <BrowserChrome />
      <Page>
        <PageMain>
          <AppHeader />
          <RecordHeader>
            <RecordIcon>
              <svg width="26" height="26" viewBox="0 0 26 26"><path d="M12 2h9.500q2.500 0 2.500 2.500V12q0 1-.7 1.700L13.500 23.500q-2 1.500-3.500 0L2 16q-1.300-1.700 0-3.400L10.500 3q.7-1 1.500-1z" fill="#fff" /><circle cx="19.300" cy="7" r="1.900" fill="#3ba755" /><path d="m10.500 10 5 5.500M7 13l4.800 5.500" stroke="#3ba755" strokeWidth="1.900" /></svg>
            </RecordIcon>
            <RecordTitle>
              <Text w={44} size={15} color="#444" line={22}>Quote</Text>
              <Text w={100} size={20.5} weight={700} line={22}>00141959</Text>
            </RecordTitle>
            <Button $w={112} $mt={2}>
              <ToolIcon $drop={3}><Stroke w={15} h={15} c="#0176d3" sw={2}><path d="M7.500 1v13M1 7.500h13" /></Stroke></ToolIcon>
              <Text w={46} size={15}>Follow</Text>
            </Button>
            <ButtonGroup>
              {actions.map(([name, bw, tw]) => <Button key={name} $w={bw}><Text w={tw} size={15}>{name}</Text></Button>)}
            </ButtonGroup>
          </RecordHeader>
          <Body>
            <TopoStrip $w={14}><Topo w={14} shift={350} /></TopoStrip>
            <Sheet><QuoteForm /></Sheet>
            <TopoStrip $w={628} $edge><Topo w={627} /></TopoStrip>
          </Body>
          <UtilityBar>
            <svg width="14" height="17" viewBox="0 0 14 17"><path d="M8.500 0 1 9.300h4.600L4.600 17 13 7.300H8.200z" fill="#181818" /></svg>
            <Text w={88} size={15}>Recent Items</Text>
          </UtilityBar>
        </PageMain>
        <ScrollTrack>
          <svg width="14" height="10" viewBox="0 0 14 10"><path d="M7 0 14 10H0z" fill="#8a8a8a" /></svg>
          <ScrollThumb />
          <Triangle w={14} h={11} c="#8a8a8a" />
        </ScrollTrack>
      </Page>
      <SystemTaskbar />
      <AutomationPanel />
    </Screen>
  );
}
